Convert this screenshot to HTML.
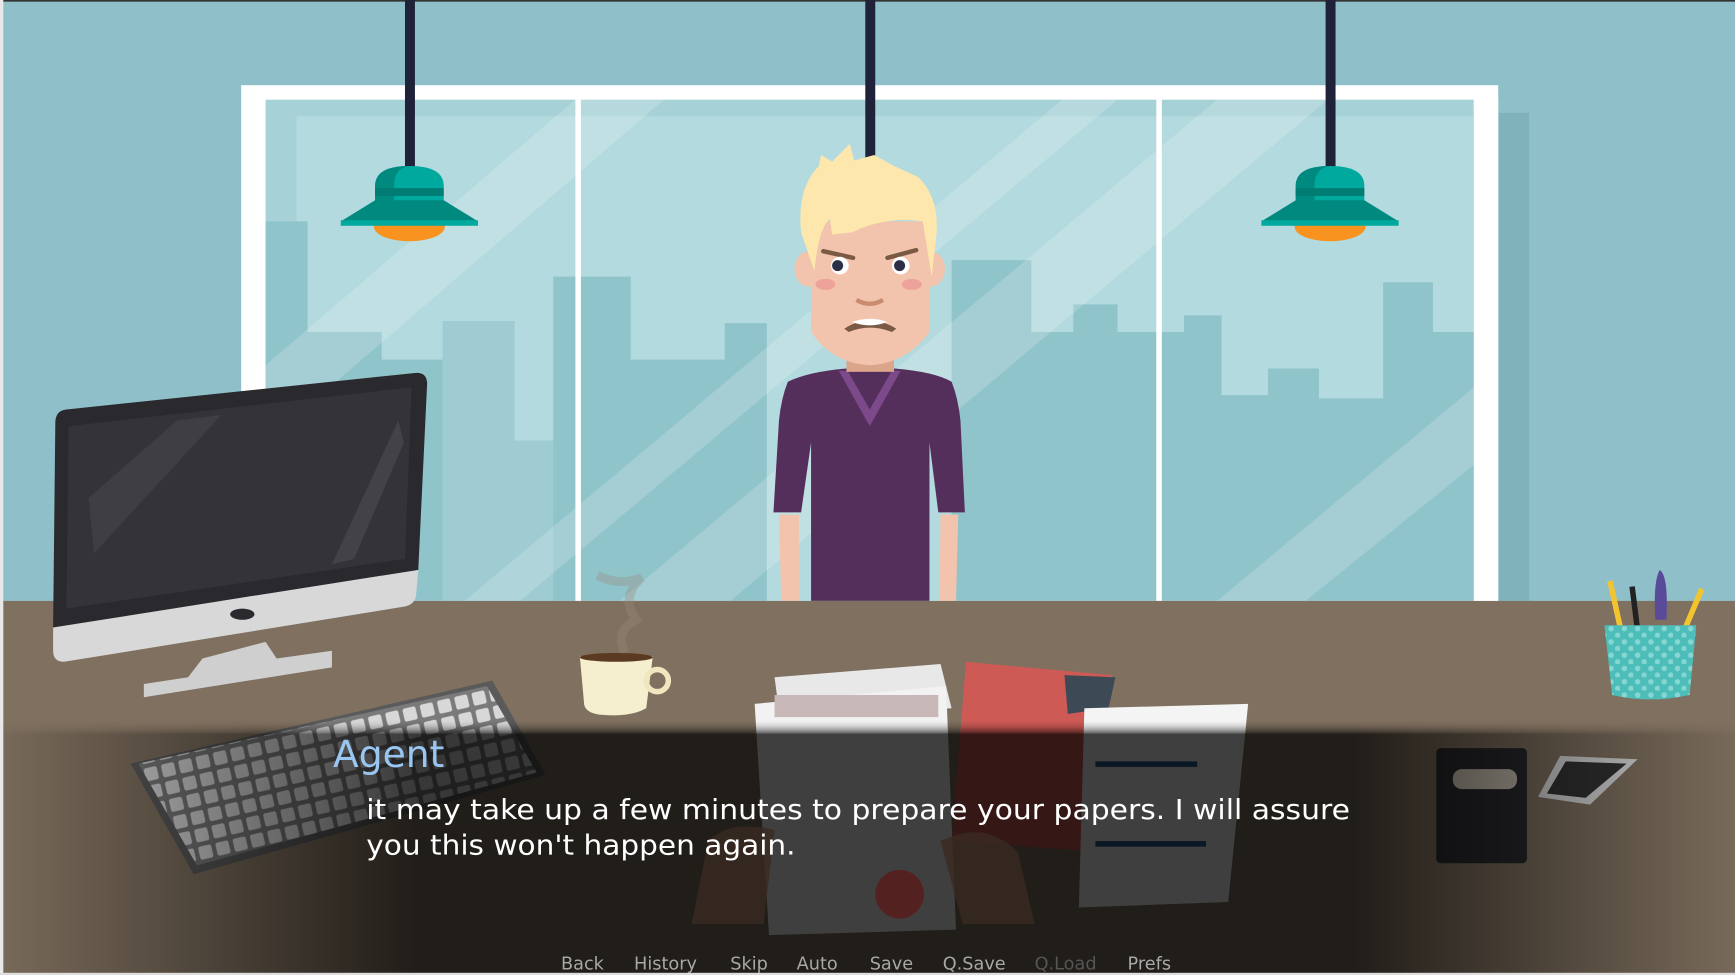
<!DOCTYPE html>
<html><head><meta charset="utf-8"><style>
html,body{margin:0;padding:0;width:1735px;height:975px;overflow:hidden;background:#8fc0c9}
svg{display:block}
</style></head><body>
<svg width="1735" height="975" viewBox="0 0 1568 881" preserveAspectRatio="none" xmlns="http://www.w3.org/2000/svg">
<defs>
<linearGradient id="ov" x1="0" x2="1" y1="0" y2="0">
<stop offset="0" stop-color="#000" stop-opacity="0.05"/>
<stop offset="0.24" stop-color="#000" stop-opacity="0.74"/>
<stop offset="0.78" stop-color="#000" stop-opacity="0.74"/>
<stop offset="1" stop-color="#000" stop-opacity="0.05"/>
</linearGradient>
<linearGradient id="ovt" x1="0" x2="0" y1="0" y2="1">
<stop offset="0" stop-color="#000" stop-opacity="0"/>
<stop offset="1" stop-color="#fff" stop-opacity="1"/>
</linearGradient>
<mask id="m"><rect x="0" y="650" width="1568" height="14" fill="url(#ovt)"/><rect x="0" y="663" width="1568" height="230" fill="#fff"/></mask>
<clipPath id="glass"><rect x="240" y="90" width="1092" height="453"/></clipPath>
<clipPath id="kb"><polygon points="125,690 440,620 485,698 178,782"/></clipPath>
<pattern id="dots" width="12" height="12" patternUnits="userSpaceOnUse"><rect width="12" height="12" fill="#4dbdba"/><circle cx="4" cy="4" r="2.5" fill="#86d6d2"/><circle cx="10" cy="10" r="2.5" fill="#86d6d2"/></pattern>
<pattern id="keys" width="16" height="16" patternUnits="userSpaceOnUse" patternTransform="rotate(-13)"><rect width="16" height="16" fill="#7a7a7a"/><rect x="2" y="2" width="12" height="12" rx="2" fill="#d8d8d8"/></pattern>
</defs>
<rect width="1568" height="881" fill="#8fc0c9"/>
<rect x="0" y="0" width="1568" height="1.5" fill="#333"/>
<rect x="1354" y="102" width="28" height="441" fill="#7fb2bb"/>
<rect x="218" y="77" width="1136" height="466" fill="#fff"/>
<g clip-path="url(#glass)">
<rect x="240" y="90" width="1092" height="453" fill="#a6d1d7"/>
<rect x="268" y="105" width="1064" height="438" fill="#b3dade"/>
<path fill="#90c4cb" d="M240 200 H278 V300 H308 V300 H345 V300 L345 325 H400 V290 H465 V398 H500 V250 H570 V325 H655 V292 H693 V543 H240Z"/>
<path fill="#90c4cb" d="M860 543 V235 H932 V300 H970 V275 H1010 V300 H1070 V285 H1104 V357 H1146 V333 H1192 V360 H1250 V255 H1295 V300 H1332 V543Z"/>
<path fill="#a8d2d7" d="M400 290 H465 V398 H500 V543 H400Z" opacity="0.6"/>
<g fill="#fff" opacity="0.18">
<polygon points="240,330 520,90 600,90 240,400"/>
<polygon points="420,543 960,90 1010,90 470,543"/>
<polygon points="560,543 1100,90 1200,90 660,543"/>
<polygon points="1100,543 1332,350 1332,420 1180,543"/>
</g>
</g>
<rect x="520" y="90" width="5" height="453" fill="#fff"/>
<rect x="1045" y="90" width="5" height="453" fill="#fff"/>
<rect x="1332" y="90" width="22" height="453" fill="#fff"/>
<g id="lamp">
<rect x="366" y="0" width="9" height="152" fill="#1f2238"/>
<ellipse cx="370" cy="205" rx="32" ry="13" fill="#f7931e"/>
<path d="M339 183 V168 Q339 150 370 150 Q401 150 401 168 V183Z" fill="#00a99d"/>
<path d="M339 183 V168 Q339 150 370 150 Q356 152 356 168 V183Z" fill="#00897f"/>
<rect x="339" y="170" width="62" height="7" fill="#007c73"/>
<polygon points="339,181 401,181 432,200 308,200" fill="#00897f"/>
<rect x="308" y="199" width="124" height="5" fill="#00a99d"/>
</g>
<use href="#lamp" x="832"/>
<rect x="782" y="0" width="9" height="150" fill="#1f2238"/>
<!-- character -->
<path d="M704 465 L722 465 L722 543 L706 543Z" fill="#f2c4ad"/>
<path d="M850 465 L866 465 L864 543 L849 543Z" fill="#f2c4ad"/>
<path d="M712 345 Q730 336 765 333 H808 Q845 336 860 345 Q866 360 868 380 L872 463 H848 L840 400 V543 H733 V400 L724 463 H699 L704 380 Q706 360 712 345Z" fill="#552f5b"/>
<path d="M758 335 L786 385 L814 335 L806 335 L786 370 L766 335Z" fill="#7c4a8a"/>
<rect x="765" y="296" width="43" height="40" fill="#dba58b"/>
<ellipse cx="731" cy="243" rx="13" ry="16" fill="#f2c4ad"/>
<ellipse cx="841" cy="243" rx="13" ry="16" fill="#f2c4ad"/>
<path d="M733 200 H840 V300 Q820 328 786 330 Q752 328 733 300Z" fill="#f2c4ad"/>
<path d="M724 210 Q720 170 740 150 L742 140 L752 146 L768 130 L772 145 L790 140 L808 150 L830 160 Q850 180 846 215 L842 250 L834 200 Q800 195 770 210 L752 212 L750 198 Q740 205 736 245Z" fill="#fee7ad"/>
<path d="M744 227 L771 233" stroke="#7a5a45" stroke-width="4" stroke-linecap="round"/>
<path d="M802 233 L828 226" stroke="#7a5a45" stroke-width="4" stroke-linecap="round"/>
<circle cx="759" cy="240" r="8" fill="#fff"/><circle cx="757" cy="240" r="5" fill="#2b3047"/>
<circle cx="814" cy="240" r="8" fill="#fff"/><circle cx="813" cy="240" r="5" fill="#2b3047"/>
<ellipse cx="746" cy="257" rx="9" ry="5" fill="#eda39a"/>
<ellipse cx="824" cy="257" rx="9" ry="5" fill="#eda39a"/>
<path d="M774 271 Q786 278 798 271" stroke="#c98c6f" stroke-width="4" fill="none"/>
<path d="M763 297 Q786 282 810 297 L806 300 Q786 292 767 300Z" fill="#7a5a45"/>
<path d="M770 291 Q786 285 802 291 Q786 297 770 291Z" fill="#fff"/>
<!-- desk -->
<rect x="0" y="543" width="1568" height="338" fill="#7f705f"/>
<path d="M60 370 L375 337 Q386 336 386 347 L378 515 L48 567 L50 382 Q50 371 60 370Z" fill="#2a2a2e"/>
<path d="M62 385 L372 350 L366 505 L60 550Z" fill="#333338"/>
<polygon points="80,450 160,380 200,375 85,500" fill="#fff" opacity="0.06"/>
<polygon points="300,510 360,380 365,400 320,505" fill="#fff" opacity="0.08"/>
<path d="M48 567 L378 515 L376 538 Q375 546 366 548 L58 598 Q48 598 48 588Z" fill="#d8d8d8"/>
<ellipse cx="219" cy="555" rx="11" ry="5" fill="#2a2a2e"/>
<polygon points="183,595 240,580 250,595 300,588 300,603 130,630 130,618 170,612" fill="#cfcfcf"/>
<path d="M540 520 Q560 530 580 522 Q560 540 575 560 Q555 570 565 590" stroke="#9a8a7a" stroke-width="8" fill="none" opacity="0.35"/>
<path d="M524 593 H590 L584 640 Q570 648 545 646 Q530 645 528 637Z" fill="#f5efcf"/>
<ellipse cx="557" cy="594" rx="33" ry="4" fill="#5a3a20"/>
<circle cx="594" cy="615" r="10" fill="none" stroke="#f0e6c0" stroke-width="5"/>
<polygon points="700,612 850,600 860,640 705,650" fill="#e8e8e8"/>
<polygon points="682,636 855,620 864,840 695,845" fill="#f2f2f2"/>
<rect x="700" y="628" width="148" height="20" fill="#c8b8b8"/>
<polygon points="873,598 1005,610 995,770 860,760" fill="#cd5a55"/>
<path d="M962 610 L1008 612 L1002 640 L965 645 Z" fill="#3d4a55"/>
<polygon points="980,640 1128,636 1110,815 975,820" fill="#f4f4f4"/>
<g fill="#2a5a8a"><rect x="990" y="688" width="92" height="5"/><rect x="990" y="760" width="100" height="5"/></g>
<polygon points="118,690 445,615 493,700 175,790" fill="#5a5a5a"/>
<polygon points="125,690 440,620 485,698 178,782" fill="url(#keys)"/>
<line x1="1455" y1="525" x2="1465" y2="570" stroke="#f2c530" stroke-width="5"/>
<line x1="1475" y1="530" x2="1480" y2="570" stroke="#222" stroke-width="5"/>
<path d="M1500 515 Q1508 520 1506 560 H1496 Q1494 525 1500 515Z" fill="#5a4a9a"/>
<line x1="1538" y1="532" x2="1522" y2="570" stroke="#f2c530" stroke-width="5"/>
<path d="M1450 565 H1533 L1527 628 Q1490 636 1457 628Z" fill="url(#dots)"/>
<rect x="1298" y="676" width="82" height="104" rx="4" fill="#2a2a2e"/>
<rect x="1313" y="695" width="58" height="18" rx="8" fill="#c8c0b0"/>
<polygon points="1410,683 1480,686 1437,727 1390,720" fill="#d8d8d8"/>
<polygon points="1415,688 1470,690 1433,721 1398,717" fill="#333"/>
<rect x="0" y="650" width="1568" height="231" fill="url(#ov)" mask="url(#m)"/>
<path d="M640 760 Q660 740 700 750 L690 835 L625 835Z" fill="#3a2a22" opacity="0.8"/>
<path d="M850 760 Q890 740 920 770 L935 835 L870 835Z" fill="#3a2a22" opacity="0.8"/>
<circle cx="813" cy="808" r="22" fill="#5a1a1a" opacity="0.8"/>
<rect x="0" y="0" width="3" height="881" fill="#e8e8e8"/>
<rect x="0" y="879" width="1568" height="2" fill="#ddd"/>
<text x="301" y="693" font-family="DejaVu Sans, Liberation Sans, sans-serif" font-size="34" fill="#99c7f2">Agent</text>
<g font-family="DejaVu Sans, Liberation Sans, sans-serif" font-size="25" fill="#fff">
<text x="331" y="740" textLength="889" lengthAdjust="spacingAndGlyphs">it may take up a few minutes to prepare your papers. I will assure</text>
<text x="331" y="772" textLength="388" lengthAdjust="spacingAndGlyphs">you this won't happen again.</text>
</g>
<g font-family="DejaVu Sans, Liberation Sans, sans-serif" font-size="16" fill="#a8a8a8">
<text x="507" y="876">Back</text>
<text x="573" y="876">History</text>
<text x="660" y="876">Skip</text>
<text x="720" y="876">Auto</text>
<text x="786" y="876">Save</text>
<text x="852" y="876">Q.Save</text>
<text x="935" y="876" fill="#555">Q.Load</text>
<text x="1019" y="876">Prefs</text>
</g>
</svg>
</body></html>
